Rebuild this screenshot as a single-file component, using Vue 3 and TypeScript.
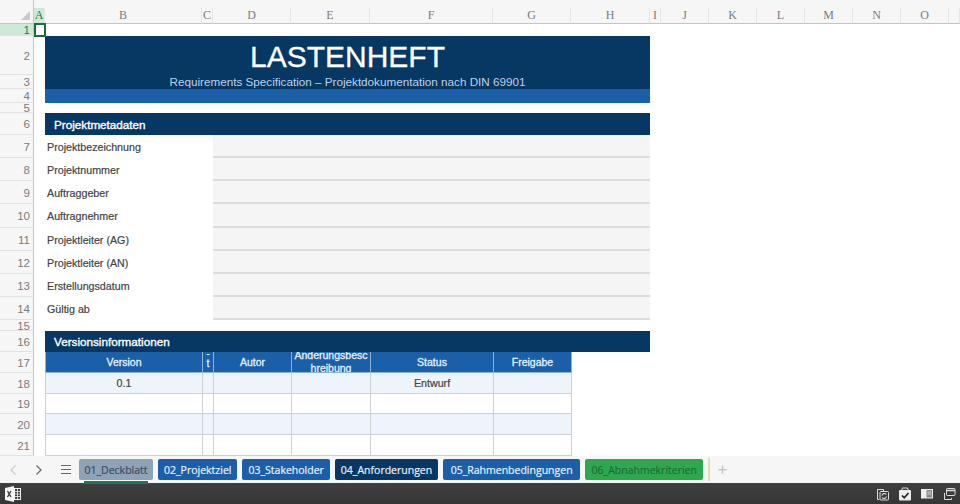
<script setup lang="ts">
interface Row {
  num: number;
  selected?: boolean;
}

const columns = ['A', 'B', 'C', 'D', 'E', 'F', 'G', 'H', 'I', 'J', 'K', 'L', 'M', 'N', 'O', ''];
const rows: Row[] = Array.from({ length: 21 }, (_, i) => ({ num: i + 1, selected: i === 0 }));

const metadata = [
  'Projektbezeichnung',
  'Projektnummer',
  'Auftraggeber',
  'Auftragnehmer',
  'Projektleiter (AG)',
  'Projektleiter (AN)',
  'Erstellungsdatum',
  'Gültig ab',
];

const versionRows = [
  ['0.1', '', '', '', 'Entwurf', ''],
  ['', '', '', '', '', ''],
  ['', '', '', '', '', ''],
  ['', '', '', '', '', ''],
];

const tabs = [
  { name: '01_Deckblatt', cls: 'tab-active' },
  { name: '02_Projektziel', cls: 'tab-blue' },
  { name: '03_Stakeholder', cls: 'tab-blue' },
  { name: '04_Anforderungen', cls: 'tab-navy' },
  { name: '05_Rahmenbedingungen', cls: 'tab-blue tab-wide' },
  { name: '06_Abnahmekriterien', cls: 'tab-green' },
];

// sheet grid lines: col 1 is the row header, row 1 the column header
function place(col: number, row: number, colSpan = 1, rowSpan = 1) {
  return { gridColumn: `${col} / span ${colSpan}`, gridRow: `${row} / span ${rowSpan}` };
}
</script>

<template>
  <div class="app">
    <div class="top-strip"></div>

    <div class="sheet">
      <!-- column + row headers -->
      <div class="corner" :style="place(1, 1)"><span class="corner-mark"></span></div>
      <div
        v-for="(col, i) in columns"
        :key="'c' + i"
        class="col-head"
        :class="{ 'head-on': col === 'A' }"
        :style="place(i + 2, 1)"
      >{{ col }}</div>
      <div
        v-for="row in rows"
        :key="'r' + row.num"
        class="row-head"
        :class="{ 'head-on': row.selected }"
        :style="place(1, row.num + 1)"
      >{{ row.num }}</div>

      <!-- title banner -->
      <div class="banner-title" :style="place(3, 3, 7)">LASTENHEFT</div>
      <div class="banner-sub" :style="place(3, 4, 7)">Requirements Specification – Projektdokumentation nach DIN 69901</div>
      <div class="banner-strip" :style="place(3, 5, 7)"></div>

      <!-- project metadata -->
      <div class="section" :style="place(3, 7, 7)">Projektmetadaten</div>
      <template v-for="(label, i) in metadata" :key="label">
        <div class="meta-label" :style="place(3, 8 + i, 2)">{{ label }}</div>
        <div class="meta-value" :style="place(5, 8 + i, 5)"></div>
      </template>

      <!-- version info -->
      <div class="section" :style="place(3, 17, 7)">Versionsinformationen</div>
      <div class="th" :style="place(3, 18)">Version</div>
      <div class="th th-narrow" :style="place(4, 18)">-<br />t</div>
      <div class="th" :style="place(5, 18)">Autor</div>
      <div class="th th-clip" :style="place(6, 18)">Änderungsbesc<br />hreibung</div>
      <div class="th" :style="place(7, 18)">Status</div>
      <div class="th th-last" :style="place(8, 18)">Freigabe</div>
      <template v-for="(cells, r) in versionRows" :key="r">
        <div
          v-for="(cell, c) in cells"
          :key="c"
          class="td"
          :class="{ stripe: r % 2 === 0, 'td-last': c === cells.length - 1 }"
          :style="place(3 + c, 19 + r)"
        >{{ cell }}</div>
      </template>

      <!-- A1 selection -->
      <div class="cursor" :style="place(2, 2)"></div>
    </div>

    <div class="tab-bar">
      <button class="nav-btn nav-off" aria-label="Previous">
        <svg width="8" height="12" viewBox="0 0 8 12"><path d="M6.5 1.5 2 6l4.5 4.5" /></svg>
      </button>
      <button class="nav-btn" aria-label="Next">
        <svg width="8" height="12" viewBox="0 0 8 12"><path d="M1.5 1.5 6 6l-4.5 4.5" /></svg>
      </button>
      <button class="menu-btn" aria-label="Sheets">
        <span></span><span></span><span></span>
      </button>
      <div class="tabs">
        <div v-for="tab in tabs" :key="tab.name" class="tab" :class="tab.cls">{{ tab.name }}</div>
      </div>
      <div class="tab-sep"></div>
      <div class="tab-add">+</div>
    </div>

    <footer class="taskbar">
      <svg class="xl-icon" width="18" height="18" viewBox="0 0 18 18">
        <path d="M1 3 10 1v16l-9-2z" fill="#f4f4f4" />
        <rect x="10.5" y="3.5" width="6" height="11" fill="#3a3a3a" stroke="#f4f4f4" />
        <path d="M11 6.5h5M11 9h5M11 11.5h5M13.5 4v10" stroke="#f4f4f4" stroke-width=".8" />
        <path d="M3.5 6 7 12M7 6l-3.5 6" stroke="#333" stroke-width="1.3" />
      </svg>
      <div class="tray">
        <svg width="14" height="14" viewBox="0 0 14 14" fill="none" stroke="#ddd">
          <path d="M3.5 12.5h-2V2.5h6v2" />
          <rect x="4" y="4.5" width="8.5" height="8.5" rx="1" fill="#3a3a3a" />
          <path d="M6 8.5a2.4 2.4 0 0 1 4.3-1M10.5 9.5a2.4 2.4 0 0 1-4.3 1" stroke-width="1.2" />
        </svg>
        <svg width="14" height="14" viewBox="0 0 14 14">
          <path d="M4 3.5V2a1 1 0 0 1 1-1h4a1 1 0 0 1 1 1v1.5" fill="none" stroke="#ddd" />
          <rect x="1" y="3" width="12" height="10.5" rx="1" fill="#eee" />
          <path d="m4 8.5 2.2 2.3L10.5 6" fill="none" stroke="#222" stroke-width="1.7" />
        </svg>
        <svg width="14" height="14" viewBox="0 0 14 14">
          <rect x="1" y="2" width="12" height="9.5" fill="#eee" />
          <rect x="6.5" y="3" width="5.5" height="7.5" fill="#8a8a8a" />
          <path d="M7.5 5H11M7.5 7H11" stroke="#eee" stroke-width=".7" />
        </svg>
        <svg width="14" height="14" viewBox="0 0 14 14" fill="none" stroke="#ddd">
          <rect x="4.5" y="1.5" width="8.5" height="7" rx=".8" />
          <path d="M4.5 3.5H13" stroke-width="1.5" />
          <path d="M2.500 6v6.500h7V11" />
        </svg>
      </div>
    </footer>
  </div>
</template>

<style scoped>
.app {
  display: flex;
  flex-direction: column;
  width: 960px;
  height: 504px;
  overflow: hidden;
  background: #fff;
  font-family: "Liberation Sans", Arial, sans-serif;
}

.top-strip {
  position: relative;
  flex: none;
  height: 8px;
  background: #f6f6f6;
}

.top-strip::after {
  content: '';
  position: absolute;
  left: 33px;
  top: 0;
  bottom: 0;
  width: 1px;
  background: #c4c4c4;
}

/* == SHEET GRID == */
.sheet {
  flex: none;
  display: grid;
  height: 448px;
  grid-template-columns: 34px 11px 157px 11px 78px 79px 123px 78px 79px 11px 48px 48px 48px 48px 48px 48px 11px;
  grid-template-rows: 16px 12px 39px 14px 14px 10px 22px 23px 23px 23px 24px 23px 23px 23px 23px 11px 21px 21px 21px 20px 21px 21px;
  overflow: hidden;
}

.corner {
  position: relative;
  background: #f6f6f6;
  border-right: 1px solid #c4c4c4;
  border-bottom: 1px solid #c4c4c4;
}

.corner-mark {
  position: absolute;
  right: 3px;
  bottom: 3px;
  width: 0;
  height: 0;
  border-left: 9px solid transparent;
  border-bottom: 9px solid #c9c9c9;
}

.col-head {
  display: flex;
  align-items: center;
  justify-content: center;
  background: #f6f6f6;
  border-right: 1px solid #e6e6e6;
  border-bottom: 1px solid #c4c4c4;
  font-family: "Liberation Serif", serif;
  font-size: 12px;
  color: #7b7b7b;
}

.row-head {
  display: flex;
  align-items: center;
  justify-content: flex-end;
  padding: 1px 3px 0 0;
  background: #f6f6f6;
  border-right: 1px solid #c4c4c4;
  border-bottom: 1px solid #e2e2e2;
  font-size: 11.5px;
  color: #7b7b7b;
}

.col-head.head-on,
.row-head.head-on {
  background: #cfe9d8;
  color: #1f7a45;
}

.cursor {
  border: 2px solid #1d6b3d;
  margin: -1px -1px -1px 0;
  z-index: 2;
}

/* == BANNER == */
.banner-title {
  display: flex;
  align-items: center;
  justify-content: center;
  background: #073763;
  color: #fff;
  font-size: 30px;
  padding-top: 2px;
  -webkit-text-stroke: 0.3px #fff;
}

.banner-sub {
  display: flex;
  align-items: center;
  justify-content: center;
  padding-bottom: 1px;
  background: #073763;
  color: #b8d4ec;
  font-size: 11.7px;
}

.banner-strip {
  background: #1a5fa8;
}

/* == SECTIONS == */
.section {
  display: flex;
  align-items: center;
  padding-left: 9px;
  background: #073763;
  color: #fff;
  font-size: 11.7px;
  -webkit-text-stroke: 0.35px #fff;
}

.meta-label {
  display: flex;
  align-items: center;
  padding-left: 2px;
  background: #fff;
  color: #444;
  font-size: 10.7px;
  -webkit-text-stroke: 0.2px #444;
}

.meta-value {
  background: #f5f5f5;
  border-bottom: 2px solid #dcdcdc;
}

/* == VERSION TABLE == */
.th {
  display: flex;
  align-items: center;
  justify-content: center;
  text-align: center;
  overflow: hidden;
  background: #1a5fa8;
  color: #e6f0fa;
  border-left: 1px solid #8fb3d6;
  border-bottom: 1px solid #8fb3d6;
  font-size: 10.5px;
  -webkit-text-stroke: 0.3px #e6f0fa;
}

.th-last {
  box-shadow: 1px 0 0 #8fb3d6;
  z-index: 1;
}

.th-clip {
  line-height: 13px;
}

.th-narrow {
  align-items: flex-end;
  padding-bottom: 4px;
  line-height: 10px;
}

.td {
  display: flex;
  align-items: center;
  justify-content: center;
  background: #fff;
  color: #444;
  border-left: 1px solid #cfd0d2;
  border-bottom: 1px solid #cfd0d2;
  font-size: 10.7px;
  -webkit-text-stroke: 0.2px #444;
}

.td.stripe {
  background: #eef4fb;
}

.td-last {
  box-shadow: 1px 0 0 #cfd0d2;
  z-index: 1;
}

/* == TABS == */
.tab-bar {
  display: flex;
  align-items: flex-start;
  flex: none;
  height: 27px;
  background: #f6f6f6;
}

.nav-btn,
.menu-btn {
  display: flex;
  align-items: center;
  justify-content: center;
  padding: 0;
  border: none;
  background: none;
  height: 27px;
}

.nav-btn {
  width: 26px;
}

.nav-btn svg {
  fill: none;
  stroke: #666;
  stroke-width: 1.2;
}

.nav-btn.nav-off svg {
  stroke: #c8c8c8;
}

.menu-btn {
  flex-direction: column;
  gap: 2.5px;
  width: 27px;
}

.menu-btn span {
  display: block;
  width: 10px;
  height: 1.5px;
  background: #666;
}

.tabs {
  display: flex;
  gap: 5px;
  margin-top: 3px;
}

.tab {
  position: relative;
  display: flex;
  align-items: center;
  justify-content: center;
  height: 21px;
  padding: 0 6.500px;
  border-radius: 2px;
  font-family: "Open Sans", sans-serif;
  font-size: 10.5px;
  -webkit-text-stroke: 0.2px;
  white-space: nowrap;
}

.tab-blue,
.tab-navy {
  padding: 0 6px;
}

.tab-blue.tab-wide {
  padding: 0 7.5px;
}

.tab-active {
  width: 74px;
  padding: 0;
  background: #8ea2b8;
  color: #3d4d5e;
}

.tab-active::after {
  content: '';
  position: absolute;
  left: 5px;
  right: 5px;
  top: 22px;
  height: 3px;
  background: #217a46;
}

.tab-blue {
  background: #1a5fa8;
  color: #e8f1fa;
}

.tab-navy {
  background: #073763;
  color: #e8f1fa;
}

.tab-green {
  background: #2ea84f;
  color: #1f6e38;
}

.tab-sep {
  width: 2px;
  height: 23px;
  margin: 2px 0 0 5px;
  background: #e5dcc0;
}

.tab-add {
  margin-left: 7px;
  height: 27px;
  line-height: 27px;
  color: #c2c2c2;
  font-size: 17px;
}

/* == TASKBAR == */
.taskbar {
  display: flex;
  align-items: center;
  justify-content: space-between;
  flex: 1;
  padding: 0 4px;
  background: linear-gradient(#3f3f3f, #363636);
}

.tray {
  display: flex;
  align-items: center;
  gap: 8px;
}
</style>
